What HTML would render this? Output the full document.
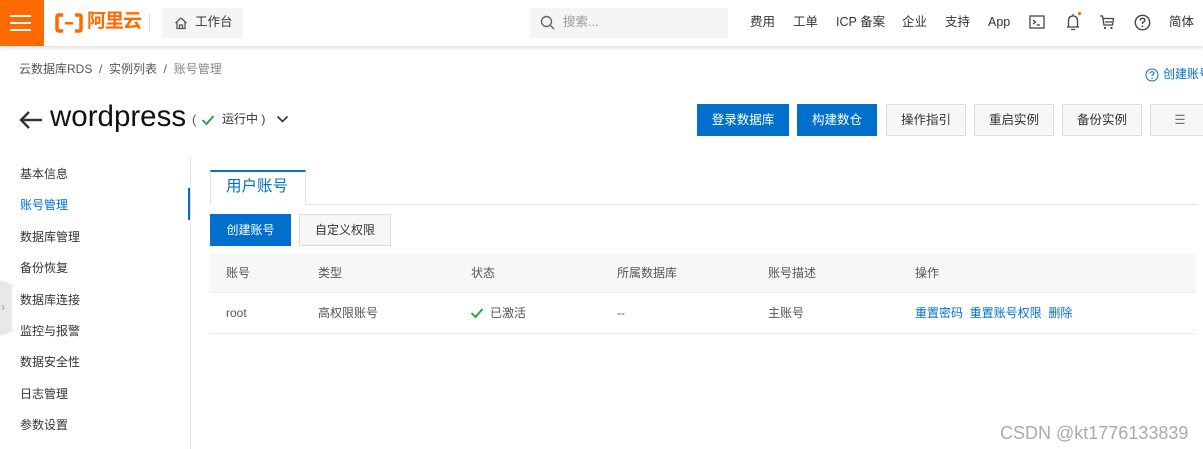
<!DOCTYPE html>
<html><head><meta charset="utf-8">
<style>
*{margin:0;padding:0;box-sizing:border-box}
body{width:1203px;height:449px;overflow:hidden;background:#fff;font-family:"Liberation Sans","Noto Sans CJK SC",sans-serif;color:#333;font-size:12px;position:relative;line-height:1.2}
.a{position:absolute;white-space:nowrap}
.hdr{position:absolute;left:0;top:0;width:1203px;height:46px;background:#fff;box-shadow:0 2px 4px rgba(0,0,0,.12)}
.btn{position:absolute;top:104px;height:32px;line-height:30px;text-align:center;font-size:12.5px;border:1px solid #ddd;background:#f7f7f7;color:#333}
.btn.b{background:#0070cc;border-color:#0070cc;color:#fff}
.nav{position:absolute;left:20px;font-size:12px;color:#333}
.th{position:absolute;top:266px;font-size:12px;color:#555}
.td{position:absolute;top:306px;font-size:12px;color:#555}
.hn{position:absolute;top:15px;font-size:12.5px;color:#333}
</style></head><body>
<div class="hdr"></div>
<div class="a" style="left:0;top:0;width:44px;height:46px;background:#ff6a00"></div>
<div class="a" style="left:10px;top:15px;width:21px;height:2px;background:#fff"></div>
<div class="a" style="left:10px;top:22px;width:21px;height:2px;background:#fff"></div>
<div class="a" style="left:10px;top:29px;width:21px;height:2px;background:#fff"></div>
<svg class="a" style="left:55px;top:13px" width="28" height="20" viewBox="0 0 28 20"><path d="M8 2H4Q2 2 2 4V16Q2 18 4 18H8M20 2H24Q26 2 26 4V16Q26 18 24 18H20" fill="none" stroke="#ff6a00" stroke-width="3.5"/><rect x="10" y="9" width="8" height="2.5" fill="#ff6a00"/></svg>
<div class="a" style="left:87px;top:11px;font-size:19px;font-weight:bold;color:#ff6a00;letter-spacing:-1px">阿里云</div>
<div class="a" style="left:149px;top:14px;width:1px;height:18px;background:#ddd"></div>
<div class="a" style="left:162px;top:8px;width:81px;height:30px;background:#f5f5f6"></div>
<svg class="a" style="left:174px;top:16px" width="14" height="14" viewBox="0 0 14 14"><path d="M1.5 7L7 2L12.5 7M3 6V12.5H11V6M5.5 12.5V9H8.5V12.5" fill="none" stroke="#555" stroke-width="1.3"/></svg>
<div class="hn" style="left:195px">工作台</div>
<div class="a" style="left:530px;top:8px;width:198px;height:30px;background:#f5f5f6"></div>
<svg class="a" style="left:540px;top:15px" width="15" height="15" viewBox="0 0 15 15"><circle cx="6.5" cy="6.5" r="5" fill="none" stroke="#666" stroke-width="1.4"/><path d="M10 10L14 14" stroke="#666" stroke-width="1.4"/></svg>
<div class="hn" style="left:563px;color:#999">搜索...</div>
<div class="hn" style="left:750px">费用</div>
<div class="hn" style="left:793px">工单</div>
<div class="hn" style="left:836px">ICP 备案</div>
<div class="hn" style="left:902px">企业</div>
<div class="hn" style="left:945px">支持</div>
<div class="hn" style="left:988px">App</div>
<svg class="a" style="left:1029px;top:15px" width="16" height="14" viewBox="0 0 16 14"><rect x="1" y="1" width="14" height="12" fill="none" stroke="#444" stroke-width="1.3"/><path d="M4 5L6.5 7L4 9M7.5 10H11" fill="none" stroke="#444" stroke-width="1.2"/></svg>
<svg class="a" style="left:1064px;top:12px" width="18" height="20" viewBox="0 0 18 20"><path d="M3 15H15M4.5 15V9Q4.5 4 9 4Q13.5 4 13.5 9V15M7 17.5H11M9 2V4" fill="none" stroke="#444" stroke-width="1.3"/><circle cx="15.5" cy="1.5" r="1.6" fill="#ff6a00"/></svg>
<svg class="a" style="left:1099px;top:14px" width="16" height="16" viewBox="0 0 16 16"><path d="M1 2H3.5L5 11H13.5L14.5 4.5H4M6 8H13" fill="none" stroke="#444" stroke-width="1.3"/><circle cx="6" cy="14" r="1.1" fill="#444"/><circle cx="12.5" cy="14" r="1.1" fill="#444"/></svg>
<svg class="a" style="left:1134px;top:14px" width="17" height="17" viewBox="0 0 17 17"><circle cx="8.5" cy="8.5" r="7.2" fill="none" stroke="#444" stroke-width="1.4"/><path d="M6.2 6.5Q6.2 4.3 8.5 4.3Q10.8 4.3 10.8 6.3Q10.8 7.6 8.5 8.6V10" fill="none" stroke="#444" stroke-width="1.4"/><circle cx="8.5" cy="12.3" r="0.9" fill="#444"/></svg>
<div class="hn" style="left:1169px">简体</div>

<div class="a" style="left:19px;top:62px;font-size:12px;color:#555">云数据库RDS&nbsp;&nbsp;/&nbsp;&nbsp;实例列表&nbsp;&nbsp;/&nbsp;&nbsp;<span style="color:#888">账号管理</span></div>
<svg class="a" style="left:1145px;top:68px" width="14" height="14" viewBox="0 0 14 14"><circle cx="7" cy="7" r="6" fill="none" stroke="#0070cc" stroke-width="1"/><path d="M5 5.5Q5 3.7 7 3.7Q9 3.7 9 5.3Q9 6.3 7 7.2V8.3" fill="none" stroke="#0070cc" stroke-width="1"/><circle cx="7" cy="10.2" r="0.7" fill="#0070cc"/></svg>
<div class="a" style="left:1163px;top:67px;font-size:12px;color:#0070cc">创建账号</div>

<svg class="a" style="left:18px;top:109px" width="26" height="22" viewBox="0 0 26 22"><path d="M24 11H3M11 3L3 11L11 19" fill="none" stroke="#333" stroke-width="2.4"/></svg>
<div class="a" style="left:50px;top:99px;font-size:29.5px;color:#111">wordpress</div>
<div class="a" style="left:192px;top:112px;font-size:13px;color:#555">(</div>
<svg class="a" style="left:201px;top:114px" width="14" height="12" viewBox="0 0 14 12"><path d="M1.5 6L5.5 10L12.5 2" fill="none" stroke="#1aa33e" stroke-width="1.8"/></svg>
<div class="a" style="left:222px;top:112px;font-size:12px;color:#333">运行中 )</div>
<svg class="a" style="left:276px;top:115px" width="13" height="9" viewBox="0 0 13 9"><path d="M1.5 1.5L6.5 6.5L11.5 1.5" fill="none" stroke="#333" stroke-width="1.6"/></svg>

<div class="btn b" style="left:697px;width:92px">登录数据库</div>
<div class="btn b" style="left:797px;width:80px">构建数仓</div>
<div class="btn" style="left:886px;width:80px">操作指引</div>
<div class="btn" style="left:974px;width:80px">重启实例</div>
<div class="btn" style="left:1062px;width:80px">备份实例</div>
<div class="btn" style="left:1150px;width:60px;color:#777">☰</div>

<div class="nav" style="top:167px">基本信息</div>
<div class="nav" style="top:198px;color:#0070cc">账号管理</div>
<div class="nav" style="top:230px">数据库管理</div>
<div class="nav" style="top:261px">备份恢复</div>
<div class="nav" style="top:293px">数据库连接</div>
<div class="nav" style="top:324px">监控与报警</div>
<div class="nav" style="top:355px">数据安全性</div>
<div class="nav" style="top:387px">日志管理</div>
<div class="nav" style="top:418px">参数设置</div>
<div class="a" style="left:190px;top:157px;width:1px;height:292px;background:#e3e3e3"></div>
<div class="a" style="left:188px;top:188px;width:2px;height:32px;background:#0070cc"></div>
<div class="a" style="left:0;top:280px;width:12px;height:56px;background:#e8e8e8;clip-path:polygon(0 0,100% 8%,100% 92%,0 100%)"></div>
<div class="a" style="left:1px;top:300px;font-size:12px;color:#999">›</div>

<div class="a" style="left:210px;top:204px;width:986px;height:1px;background:#e3e3e3"></div>
<div class="a" style="left:210px;top:170px;width:96px;height:35px;background:#fff;border:1px solid #e3e3e3;border-top:2px solid #0070cc;border-bottom:none"></div>
<div class="a" style="left:226px;top:178px;font-size:15.5px;color:#0070cc">用户账号</div>
<div class="a" style="left:210px;top:214px;width:81px;height:32px;background:#0070cc;color:#fff;text-align:center;line-height:32px">创建账号</div>
<div class="a" style="left:299px;top:214px;width:92px;height:32px;background:#f7f7f7;border:1px solid #ddd;color:#333;text-align:center;line-height:30px">自定义权限</div>

<div class="a" style="left:210px;top:254px;width:986px;height:38px;background:#f7f7f7"></div>
<div class="a" style="left:210px;top:292px;width:986px;height:1px;background:#ebebeb"></div>
<div class="a" style="left:210px;top:333px;width:986px;height:1px;background:#ebebeb"></div>
<div class="th" style="left:226px">账号</div>
<div class="th" style="left:318px">类型</div>
<div class="th" style="left:471px">状态</div>
<div class="th" style="left:617px">所属数据库</div>
<div class="th" style="left:768px">账号描述</div>
<div class="th" style="left:915px">操作</div>
<div class="td" style="left:226px">root</div>
<div class="td" style="left:318px">高权限账号</div>
<svg class="a" style="left:470px;top:307px" width="14" height="12" viewBox="0 0 14 12"><path d="M1.5 6L5.5 10L12.5 2" fill="none" stroke="#1aa33e" stroke-width="1.8"/></svg>
<div class="td" style="left:490px">已激活</div>
<div class="td" style="left:617px">--</div>
<div class="td" style="left:768px">主账号</div>
<div class="td" style="left:915px;color:#0070cc">重置密码&nbsp; 重置账号权限&nbsp; 删除</div>

<div class="a" style="left:1000px;top:423px;font-size:18px;color:#aaa">CSDN @kt1776133839</div>
</body></html>
